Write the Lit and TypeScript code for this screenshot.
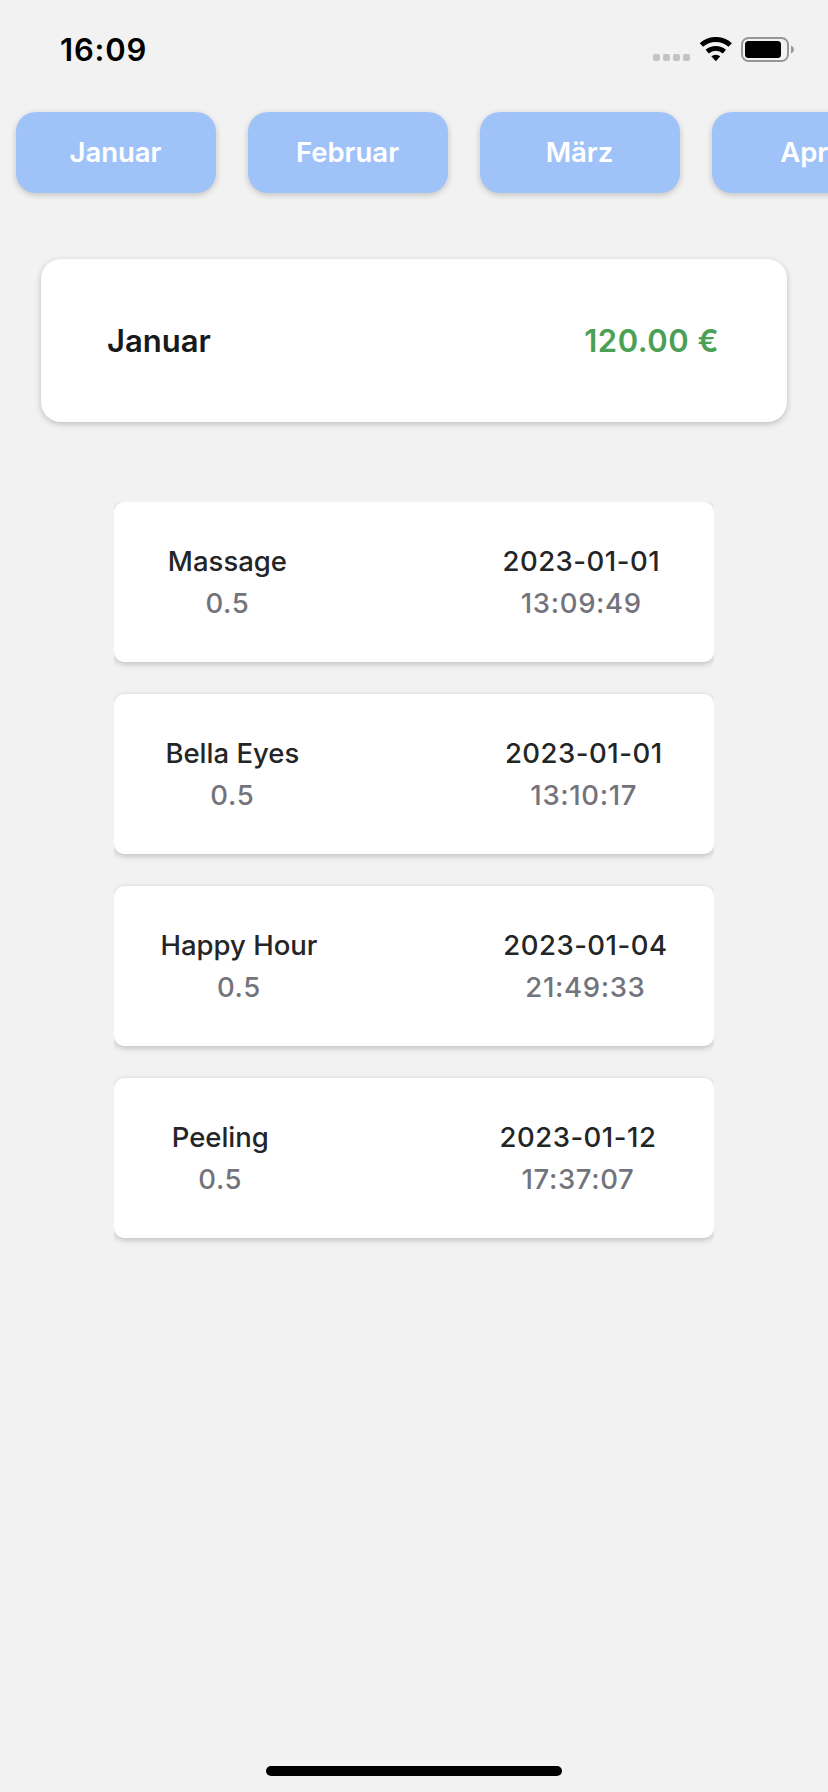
import { LitElement, html, css } from "lit";
import { customElement, property, state } from "lit/decorators.js";

interface Entry {
  title: string;
  amount: string;
  date: string;
  time: string;
}

@customElement("status-bar")
class StatusBar extends LitElement {
  static styles = css`
    :host {
      display: flex;
      justify-content: space-between;
      height: 99px;
      box-sizing: border-box;
      padding: 0 34px 0 60px;
      align-items: center;
    }
    .clock {
      font-size: 31px;
      font-weight: 600;
      letter-spacing: 0.8px;
      color: #000;
    }
    .icons {
      display: flex;
      align-items: center;
    }
    .dots {
      display: flex;
      gap: 3px;
      margin: 16px 10px 0 0;
    }
    .dot {
      width: 7px;
      height: 7px;
      border-radius: 2px;
      background: #c3c3c3;
    }
    .wifi {
      margin-right: 9px;
    }
    svg {
      display: block;
    }
  `;

  render() {
    return html`
      <div class="clock">16:09</div>
      <div class="icons">
        <div class="dots">
          <div class="dot"></div>
          <div class="dot"></div>
          <div class="dot"></div>
          <div class="dot"></div>
        </div>
        <svg class="wifi" width="32" height="25" viewBox="0 0 32 25">
          <path d="M1.4 8A21.5 21.5 0 0 1 30.2 8" fill="none" stroke="#000" stroke-width="5" />
          <path d="M7.2 14.6A13.2 13.2 0 0 1 24.4 14.6" fill="none" stroke="#000" stroke-width="4.8" />
          <path d="M11.3 19.3A7 7 0 0 1 20.3 19.3L16.3 23.8Q15.8 24.3 15.3 23.8Z" fill="#000" />
        </svg>
        <svg width="53" height="25" viewBox="0 0 53 25">
          <rect x="1" y="1" width="46" height="23" rx="6.5" fill="none" stroke="#979797" stroke-width="2" />
          <rect x="4" y="4" width="36" height="17" rx="3.5" fill="#000" />
          <path d="M50 8.5Q53 9.8 53 12.5Q53 15.2 50 16.5Z" fill="#979797" />
        </svg>
      </div>
    `;
  }
}

@customElement("month-button")
class MonthButton extends LitElement {
  static styles = css`
    :host {
      display: block;
      flex: none;
    }
    .button {
      display: flex;
      align-items: center;
      justify-content: center;
      width: 200px;
      height: 81px;
      box-sizing: border-box;
      padding: 0 1px 2px 0;
      border-radius: 20px;
      background: #9fc3f9;
      color: #fff;
      font-size: 27.5px;
      font-weight: 600;
      letter-spacing: 0;
      box-shadow: 0 2px 6px rgba(0, 0, 0, 0.2);
    }
  `;

  @property() label = "";

  render() {
    return html`<div class="button">${this.label}</div>`;
  }
}

@customElement("entry-card")
class EntryCard extends LitElement {
  static styles = css`
    :host {
      display: block;
    }
    .card {
      display: flex;
      align-items: center;
      justify-content: space-around;
      height: 160px;
      border-radius: 10px;
      background: #fff;
      font-size: 27.5px;
      font-weight: 500;
      line-height: 42px;
      text-align: center;
      box-shadow: 0 2px 6px rgba(0, 0, 0, 0.22);
    }
    .title,
    .date {
      color: #242526;
    }
    .title {
      letter-spacing: 0;
    }
    .date {
      letter-spacing: 0.5px;
    }
    .amount,
    .time {
      color: #73737c;
      letter-spacing: 0.65px;
    }
  `;

  @property({ attribute: false }) entry!: Entry;

  render() {
    const { title, amount, date, time } = this.entry;
    return html`
      <div class="card">
        <div>
          <div class="title">${title}</div>
          <div class="amount">${amount}</div>
        </div>
        <div class="spacer"></div>
        <div>
          <div class="date">${date}</div>
          <div class="time">${time}</div>
        </div>
      </div>
    `;
  }
}

@customElement("app-root")
class AppRoot extends LitElement {
  static styles = css`
    :host {
      display: flex;
      flex-direction: column;
      width: 828px;
      height: 1792px;
      overflow: hidden;
      background: #f2f2f2;
      font-family: Inter, "Liberation Sans", sans-serif;
    }
    .months {
      display: flex;
      gap: 32px;
      padding: 13px 16px 20px;
      overflow: hidden;
    }
    .summary {
      display: flex;
      align-items: center;
      justify-content: space-between;
      height: 163px;
      box-sizing: border-box;
      margin: 46px 41px 80px;
      padding: 0 68px 0 66px;
      border-radius: 20px;
      background: #fff;
      font-size: 31px;
      font-weight: 600;
      box-shadow: 0 2px 6px rgba(0, 0, 0, 0.22);
    }
    .month {
      color: #18191a;
    }
    .total {
      color: #4aa054;
      letter-spacing: 0.5px;
    }
    .entries {
      display: flex;
      flex-direction: column;
      gap: 32px;
      width: 600px;
      align-self: center;
      padding-bottom: 32px;
      overflow: hidden;
    }
    .home {
      width: 296px;
      height: 10px;
      margin: auto auto 16px;
      border-radius: 5px;
      background: #000;
    }
  `;

  @state() private months = ["Januar", "Februar", "März", "April"];

  @state() private entries: Entry[] = [
    { title: "Massage", amount: "0.5", date: "2023-01-01", time: "13:09:49" },
    { title: "Bella Eyes", amount: "0.5", date: "2023-01-01", time: "13:10:17" },
    { title: "Happy Hour", amount: "0.5", date: "2023-01-04", time: "21:49:33" },
    { title: "Peeling", amount: "0.5", date: "2023-01-12", time: "17:37:07" },
  ];

  render() {
    return html`
      <status-bar></status-bar>
      <div class="months">
        ${this.months.map((m) => html`<month-button .label=${m}></month-button>`)}
      </div>
      <div class="summary">
        <div class="month">Januar</div>
        <div class="total">120.00 €</div>
      </div>
      <div class="entries">
        ${this.entries.map((e) => html`<entry-card .entry=${e}></entry-card>`)}
      </div>
      <div class="home"></div>
    `;
  }
}
